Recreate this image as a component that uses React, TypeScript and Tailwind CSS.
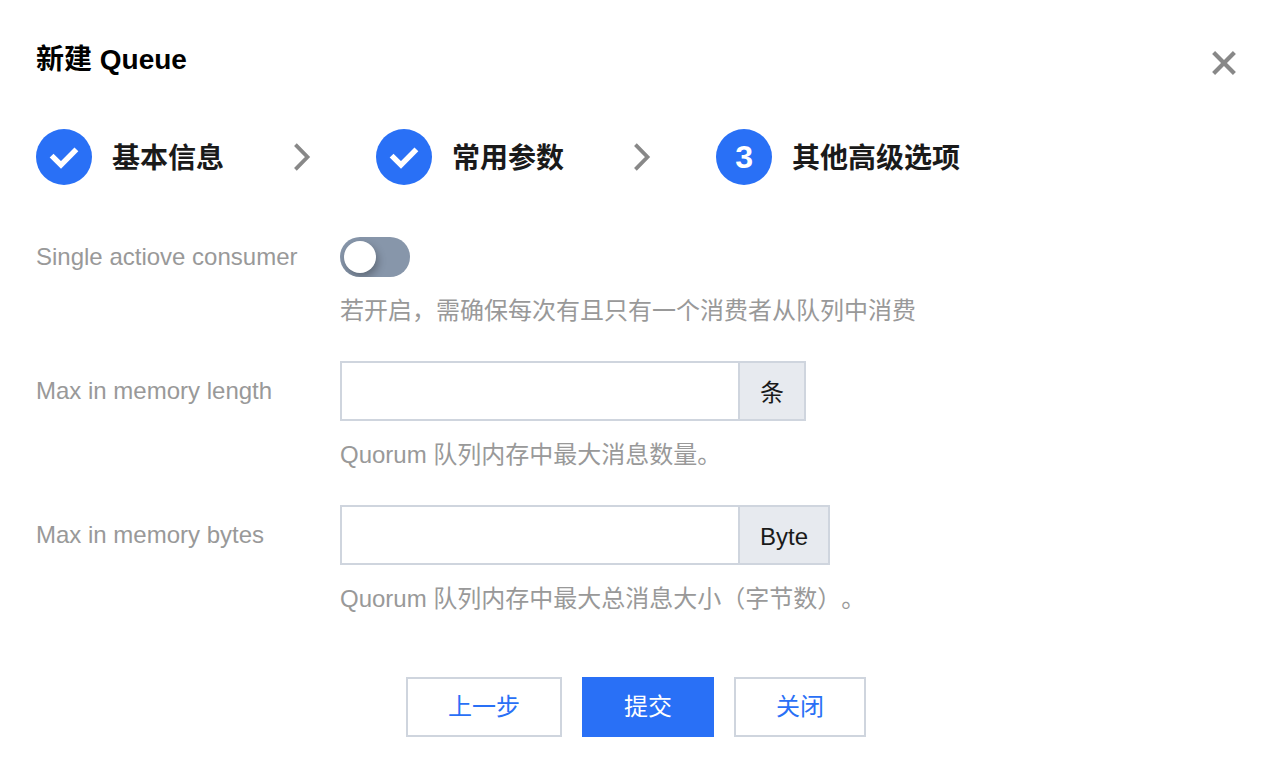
import React, { useState } from 'react';

const steps = ['基本信息', '常用参数', '其他高级选项'];
const current = 2;

function CheckIcon() {
  return (
    <svg viewBox="0 0 56 56" className="w-14 h-14" fill="none" stroke="#fff" strokeWidth="5.4" aria-hidden="true">
      <path d="M15.6 26.6 L25 36 L40.4 20.4" />
    </svg>
  );
}

function ChevronIcon() {
  return (
    <svg viewBox="0 0 18 28" className="w-[18px] h-7 ml-[70px] mr-16 shrink-0" fill="none" stroke="#888" strokeWidth="3.8" aria-hidden="true">
      <path d="M1.4 1.6 L13.5 14 L1.4 26.4" />
    </svg>
  );
}

interface FieldProps {
  id: string;
  label: string;
  hint: string;
  labelClass: string;
  children: React.ReactNode;
}

function Field({ id, label, hint, labelClass, children }: FieldProps) {
  return (
    <div className="flex items-start">
      <label htmlFor={id} className={`w-[304px] shrink-0 flex items-center text-[#999] ${labelClass}`}>
        {label}
      </label>
      <div className="flex-1 min-w-0">
        {children}
        <p id={`${id}-hint`} className="mt-4 text-[#999]">{hint}</p>
      </div>
    </div>
  );
}

interface UnitInputProps {
  id: string;
  unit: string;
  value: string;
  onChange: (value: string) => void;
}

function UnitInput({ id, unit, value, onChange }: UnitInputProps) {
  return (
    <div className="flex h-15">
      <input
        id={id}
        type="text"
        value={value}
        onChange={e => onChange(e.target.value)}
        aria-describedby={`${id}-hint`}
        className="w-[400px] min-w-0 px-5 bg-white border-2 border-[#cfd5de] text-[#1a1a1a] outline-none focus:border-[#2970f6]"
      />
      <span className="flex items-center px-5 pt-1 border-2 border-l-0 border-[#cfd5de] bg-[#e7eaef] text-[#1a1a1a]">
        {unit}
      </span>
    </div>
  );
}

export default function App() {
  const [single, setSingle] = useState(false);
  const [length, setLength] = useState('');
  const [bytes, setBytes] = useState('');

  return (
    <main className="bg-white pl-9 pr-11 pt-[45px] pb-9 font-['Liberation_Sans','Noto_Sans_CJK_SC',sans-serif] text-2xl leading-9 [text-spacing-trim:space-all]">
      <header className="flex items-end justify-between">
        <h1 className="text-[28px] leading-[30px] font-bold text-black">新建 Queue</h1>
        <button type="button" aria-label="关闭窗口" className="cursor-pointer">
          <svg viewBox="0 0 24 24" className="block w-6 h-6" fill="none" stroke="#888" strokeWidth="4.2" aria-hidden="true">
            <path d="M1.6 1.6 L22.4 22.4 M22.4 1.6 L1.6 22.4" />
          </svg>
        </button>
      </header>

      <ol className="mt-[54px] flex items-center">
        {steps.map((title, i) => (
          <li key={title} className="flex items-center" aria-current={i === current ? 'step' : undefined}>
            <span className="w-14 h-14 shrink-0 rounded-full bg-[#2970f6] flex items-center justify-center text-white text-[32px] font-bold">
              {i < current ? <CheckIcon /> : i + 1}
            </span>
            <span className="ml-5 pt-1 text-[28px] leading-9 font-bold text-[#1a1a1a] whitespace-nowrap">{title}</span>
            {i < steps.length - 1 && <ChevronIcon />}
          </li>
        ))}
      </ol>

      <form onSubmit={e => e.preventDefault()} className="mt-13">
        <div className="flex flex-col gap-8">
          <Field id="single" label="Single actiove consumer" hint="若开启，需确保每次有且只有一个消费者从队列中消费" labelClass="h-10">
            <input
              id="single"
              type="checkbox"
              role="switch"
              checked={single}
              onChange={e => setSingle(e.target.checked)}
              aria-describedby="single-hint"
              className="block appearance-none w-[70px] h-10 p-1 rounded-full overflow-hidden cursor-pointer bg-[#8796aa] checked:bg-[#2970f6] before:block before:size-8 before:rounded-full before:bg-white before:shadow-[2px_4px_8px_rgba(0,0,0,0.3)] checked:before:translate-x-[30px]"
            />
          </Field>
          <Field id="length" label="Max in memory length" hint="Quorum 队列内存中最大消息数量。" labelClass="h-15">
            <UnitInput id="length" unit="条" value={length} onChange={setLength} />
          </Field>
          <Field id="bytes" label="Max in memory bytes" hint="Quorum 队列内存中最大总消息大小（字节数）。" labelClass="h-15">
            <UnitInput id="bytes" unit="Byte" value={bytes} onChange={setBytes} />
          </Field>
        </div>

        <div className="mt-15 flex justify-center gap-5">
          <button type="button" className="h-15 px-10 border-2 border-[#cfd5de] bg-white text-[#2970f6] cursor-pointer">上一步</button>
          <button type="submit" className="h-15 px-10 border-2 border-[#2970f6] bg-[#2970f6] text-white cursor-pointer">提交</button>
          <button type="button" className="h-15 px-10 border-2 border-[#cfd5de] bg-white text-[#2970f6] cursor-pointer">关闭</button>
        </div>
      </form>
    </main>
  );
}
